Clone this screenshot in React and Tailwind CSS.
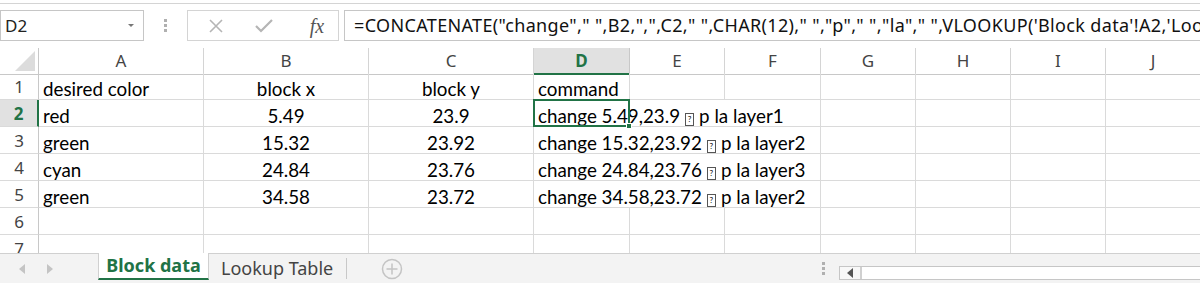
import React from 'react';

const ui = { fontFamily: '"Segoe UI", "Noto Sans", "Open Sans", sans-serif' };
const cell = { fontFamily: 'Lato, "Liberation Sans", sans-serif' };

const cols = 'grid grid-cols-[39px_165px_165px_165px_96px_95px_96px_95px_95px_95px_95px]';
const letters = ['A', 'B', 'C', 'D', 'E', 'F', 'G', 'H', 'I', 'J'];

const rows = [
  ['desired color', 'block x', 'block y', 'command'],
  ['red', '5.49', '23.9', 'change 5.49,23.9', 'layer1'],
  ['green', '15.32', '23.92', 'change 15.32,23.92', 'layer2'],
  ['cyan', '24.84', '23.76', 'change 24.84,23.76', 'layer3'],
  ['green', '34.58', '23.72', 'change 34.58,23.72', 'layer2'],
];

function Box() {
  return (
    <span className="inline-flex items-center justify-center w-[9px] h-[13px] border border-[#555] mx-[5px] text-[8px] leading-none align-[-1px]">?</span>
  );
}

function Cell({ children, className = '' }) {
  return (
    <div className={`h-[27px] border-r border-b border-[#dadada] flex items-end pb-[0px] px-[4px] text-[18.8px] leading-none text-black whitespace-nowrap ${className}`} style={cell}>
      {children}
    </div>
  );
}

function Dots() {
  return (
    <div className="flex flex-col gap-[2px]">
      <span className="w-[3px] h-[3px] bg-[#b0b0b0]" />
      <span className="w-[3px] h-[3px] bg-[#b0b0b0]" />
      <span className="w-[3px] h-[3px] bg-[#b0b0b0]" />
    </div>
  );
}

function FormulaBar() {
  return (
    <div className="h-[46px] flex items-center bg-white" style={ui}>
      <div className="w-[144px] h-[31px] border border-[#c6c6c6] flex items-center justify-between pl-[4px] pr-[9px] text-[17px] text-[#222]">
        <span>D2</span>
        <svg width="6" height="4" viewBox="0 0 6 4"><path d="M0 0h6L3 3z" fill="#777" /></svg>
      </div>
      <div className="w-[43px] flex justify-center">
        <Dots />
      </div>
      <div className="w-[152px] h-[31px] border border-[#d4d4d4] flex items-center">
        <div className="w-[56px] flex justify-center">
          <svg width="16" height="16" viewBox="0 0 16 16"><path d="M2 2l12 12M14 2L2 14" stroke="#b5b5b5" strokeWidth="1.6" /></svg>
        </div>
        <div className="w-[40px] flex justify-center">
          <svg width="18" height="14" viewBox="0 0 18 14"><path d="M1 7l5 5L17 1" stroke="#b5b5b5" strokeWidth="2.2" fill="none" /></svg>
        </div>
        <div className="flex-1 flex justify-center pl-[12px] text-[20px] italic text-[#555]" style={{ fontFamily: '"Liberation Serif", serif' }}>fx</div>
      </div>
      <div className="ml-[5px] flex-1 h-[31px] border border-[#c6c6c6] border-r-0 flex items-center pl-[9px] text-[18px] tracking-[0.35px] text-[#111] whitespace-nowrap overflow-hidden">
        =CONCATENATE("change"," ",B2,",",C2," ",CHAR(12)," ","p"," ","la"," ",VLOOKUP('Block data'!A2,'Lookup Table'!A:B,2,FALSE))
      </div>
    </div>
  );
}

function Grid() {
  return (
    <div className="overflow-hidden">
      <div className={`${cols} h-[25px]`} style={ui}>
        <div className="border-r border-b border-[#c8c8c8] flex items-end justify-end p-[3px]">
          <svg width="20" height="20" viewBox="0 0 20 20"><path d="M20 0V20H0z" fill="#dcdcdc" /></svg>
        </div>
        {letters.map((l) =>
          l === 'D' ? (
            <div key={l} className="bg-[#e1e1e1] border-r border-[#c8c8c8] border-b-2 border-b-[#217346] flex items-center justify-center text-[17px] font-bold text-[#217346]">{l}</div>
          ) : (
            <div key={l} className="border-r border-b border-[#d4d4d4] border-b-[#c8c8c8] flex items-center justify-center text-[17px] text-[#444]">{l}</div>
          )
        )}
      </div>
      {[1, 2, 3, 4, 5, 6, 7].map((n) => {
        const r = rows[n - 1];
        const sel = n === 2;
        return (
          <div key={n} className={cols}>
            <div
              className={`h-[27px] border-b border-[#dadada] flex items-center justify-center pt-[2px] text-[17px] ${sel ? 'bg-[#e1e1e1] border-r-2 border-r-[#217346] font-bold text-[#217346]' : 'border-r border-r-[#c8c8c8] text-[#444]'}`}
              style={ui}
            >
              {n}
            </div>
            {r ? (
              <>
                <Cell>{r[0]}</Cell>
                <Cell className="justify-center">{r[1]}</Cell>
                <Cell className="justify-center">{r[2]}</Cell>
                {n === 1 ? (
                  <>
                    <Cell>{r[3]}</Cell>
                    <Cell />
                    <Cell />
                  </>
                ) : (
                  <Cell className="col-span-3 relative">
                    {r[3]}
                    <Box />p la {r[4]}
                    {sel && (
                      <div className="absolute left-[-1px] top-[-1px] w-[97px] h-[28px] border-2 border-[#217346]">
                        <div className="absolute right-[-4px] bottom-[-4px] w-[6px] h-[6px] bg-[#217346] border border-white" />
                      </div>
                    )}
                  </Cell>
                )}
                {[0, 1, 2, 3].map((i) => <Cell key={i} />)}
              </>
            ) : (
              letters.map((l) => <Cell key={l} />)
            )}
          </div>
        );
      })}
    </div>
  );
}

function TabBar() {
  return (
    <div className="h-[30px] bg-[#f3f3f3] border-t border-[#d0d0d0] flex items-stretch" style={ui}>
      <div className="w-[98px] flex items-center pl-[18px] gap-[20px]">
        <svg width="8" height="10" viewBox="0 0 8 10"><path d="M7 0v10L1 5z" fill="#c4c4c4" /></svg>
        <svg width="8" height="10" viewBox="0 0 8 10"><path d="M1 0v10l6-5z" fill="#c4c4c4" /></svg>
      </div>
      <div className="w-[111px] bg-white border-x border-[#d0d0d0] border-b-2 border-b-[#217346] mb-[3px] -mt-px flex items-center justify-center text-[18px] font-bold text-[#217346]">
        Block data
      </div>
      <div className="w-[138px] flex items-center pl-[12px] text-[18px] text-[#444] border-r border-[#c8c8c8] my-[4px]">
        Lookup Table
      </div>
      <div className="w-[90px] flex items-center justify-center">
        <svg width="22" height="22" viewBox="0 0 22 22">
          <circle cx="11" cy="11" r="9.5" fill="none" stroke="#c4c4c4" strokeWidth="1.5" />
          <path d="M11 5.5v11M5.5 11h11" stroke="#c4c4c4" strokeWidth="1.5" />
        </svg>
      </div>
      <div className="flex-1" />
      <div className="w-[17px] flex items-center">
        <Dots />
      </div>
      <div className="w-[361px] mt-[12px] mb-[3px] border border-[#c6c6c6] border-r-0 bg-white flex">
        <div className="w-[22px] border-r-2 border-[#d0d0d0] bg-[#f8f8f8] flex items-center justify-center">
          <svg width="6" height="10" viewBox="0 0 6 10"><path d="M6 0v10L0 5z" fill="#555" /></svg>
        </div>
      </div>
    </div>
  );
}

export default function App() {
  return (
    <div className="w-[1200px] h-[283px] overflow-hidden bg-white flex flex-col">
      <div className="h-[4px] border-b border-[#d4d4d4]" />
      <FormulaBar />
      <Grid />
      <div className="flex-1" />
      <TabBar />
    </div>
  );
}
